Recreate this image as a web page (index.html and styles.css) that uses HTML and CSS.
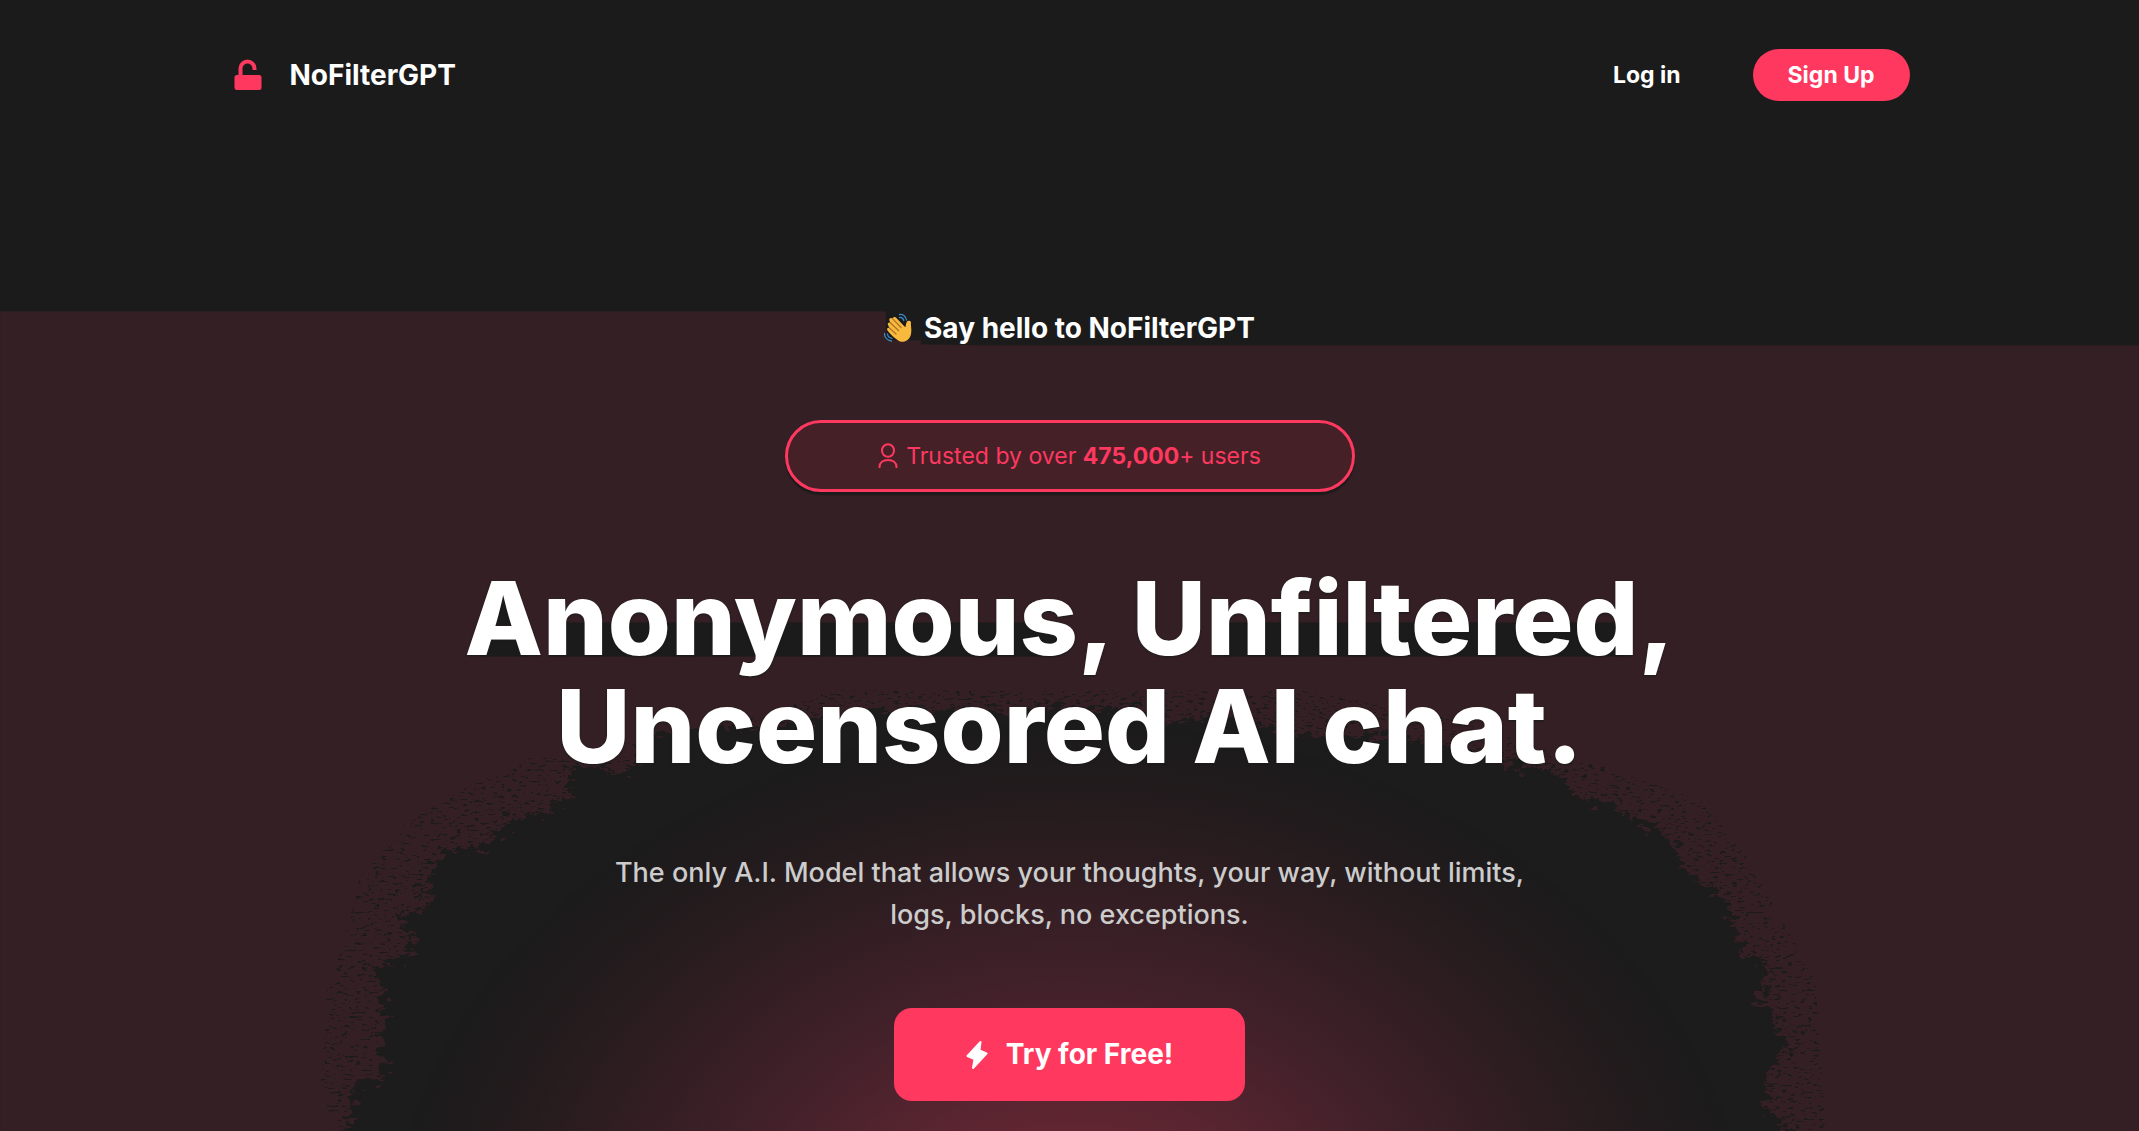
FILE: index.html
```html
<!DOCTYPE html>
<html lang="en">
<head>
  <meta charset="UTF-8">
  <title>NoFilterGPT</title>
  <meta name="viewport" content="width=device-width, initial-scale=1.0">
  <link rel="stylesheet" href="styles.css">
</head>
<body>
  <!-- backdrop -->
  <svg class="backdrop" viewBox="0 0 2139 1131" preserveAspectRatio="xMidYMin slice" aria-hidden="true">
    <defs>
      <radialGradient id="glow">
        <stop offset="0" stop-color="#7c2a3b"/>
        <stop offset="0.24" stop-color="#612632"/>
        <stop offset="0.5" stop-color="#43212a"/>
        <stop offset="0.74" stop-color="#2d1d20"/>
        <stop offset="0.86" stop-color="#231b1d"/>
        <stop offset="1" stop-color="#1b1b1b"/>
      </radialGradient>
      <filter id="jagged" x="-5%" y="-5%" width="110%" height="110%">
        <feTurbulence type="fractalNoise" baseFrequency="0.08 0.14" numOctaves="4" seed="4"/>
        <feDisplacementMap in="SourceGraphic" scale="34" xChannelSelector="R" yChannelSelector="G"/>
      </filter>
      <filter id="speckle" x="0" y="0" width="100%" height="100%" color-interpolation-filters="sRGB">
        <feTurbulence type="fractalNoise" baseFrequency="0.16 0.45" numOctaves="3" seed="9"/>
        <feColorMatrix values="0 0 0 0 0.106  0 0 0 0 0.106  0 0 0 0 0.106  0 16 0 0 -10"/>
        <feComposite in2="SourceGraphic" operator="in"/>
      </filter>
    </defs>
    <path fill="#331f24" d="M1 311H886V340H921V344L980 345H2138V1131H1z"/>
    <path fill="#1b1b1b" d="M496 625L504 597L512 625zM484 638H524L528 656H480zM560 622H742L760 656H550zM785 622H1060V656H770zM1222 622H1626V656H1222z"/>
    <path filter="url(#speckle)" d="M334 1131L322 1080L328 990L345 940L360 880L402 825L470 785L530 757L640 756L830 690L1300 690L1440 715L1630 775L1700 800L1750 860L1788 930L1815 980L1825 1131z"/>
    <path fill="#1b1b1b" filter="url(#jagged)" d="M343 1150L343 1131L353 1118L352 1105L356 1082L382 1080L385 1060L380 1040L385 1000L382 980L374 972L390 960L410 955L412 938L400 912L420 910L431 905L425 890L432 880L428 870L440 862L447 848L490 846L490 832L506 830L508 816L555 812L552 800L568 800L573 766L605 764L610 772L634 771L640 735L797 722L864 710L976 710L1136 707L1167 720L1247 720L1310 737L1386 737L1457 745L1500 763L1552 770L1570 778L1573 793L1590 801L1615 802L1625 815L1647 820L1652 832L1668 836L1676 848L1685 870L1700 880L1725 895L1733 925L1740 940L1745 956L1765 960L1762 985L1760 1000L1772 1010L1775 1030L1790 1040L1775 1058L1770 1080L1765 1095L1762 1110L1780 1115L1790 1131V1150z"/>
    <ellipse cx="1069" cy="1260" rx="680" ry="540" fill="url(#glow)"/>
  </svg>

  <header class="header">
    <a class="brand" href="#">
      <svg class="brand-icon" viewBox="0 0 28 32" aria-hidden="true">
        <path d="M6.500 18V9.500A7 7 0 0 1 20.500 9.500V11" fill="none" stroke="#ff3860" stroke-width="4"/>
        <rect x="0.500" y="16" width="27" height="15" rx="2.500" fill="#ff3860"/>
      </svg>
      <span>NoFilterGPT</span>
    </a>
    <nav class="nav">
      <a class="login" href="#">Log in</a>
      <a class="signup" href="#">Sign Up</a>
    </nav>
  </header>

  <main class="hero">
    <p class="hello">
      <svg class="wave" viewBox="0 0 30 30" aria-hidden="true">
        <path d="M4 12C3 10.500 5 8.500 6.600 10L5.400 7.500C4.600 5.500 7 4 8.500 5.600L8.800 5.500C9 3.800 11.300 3.500 12.400 5L20.500 13.500L21.500 14C22 12 22 10 23 8.500C24 7 27 7.500 27 9.500C26.500 13 28 16 27 21C26 26.500 21 30 16 28.500C13 27.500 4 19 3.200 17C2.600 15.200 4 14 5.500 15z" fill="#f9b93c"/>
        <path d="M6.600 10L14.500 17.500M8.700 5.800L17 14.500M5.500 15L12 21" fill="none" stroke="#a9702b" stroke-width="1.200" stroke-linecap="round"/>
        <path d="M15.500 1.500C19 1 22 3.500 22.500 7M15.500 4.500C17.500 4.300 19.300 5.500 19.800 7.500M0.500 20.500C0.500 24.500 3.500 27.500 7.500 28M3.500 21C3.800 23.500 5.500 25 8 25.300" fill="none" stroke="#3b88c3" stroke-width="1.300" stroke-linecap="round"/>
      </svg>
      <span>Say hello to NoFilterGPT</span>
    </p>

    <div class="trusted">
      <svg class="user" viewBox="0 0 20 26" aria-hidden="true">
        <ellipse cx="10" cy="7.500" rx="6" ry="6.300"/>
        <path d="M1.500 25V24C1.500 19.500 5.200 17 10 17S18.500 19.500 18.500 24V25"/>
      </svg>
      <span>Trusted by over <strong>475,000</strong>+ users</span>
    </div>

    <h1>Anonymous, Unfiltered,<br>Uncensored AI chat.</h1>

    <p class="lead">The only A.I. Model that allows your thoughts, your way, without limits,<br>logs, blocks, no exceptions.</p>

    <a class="cta" href="#">
      <svg class="bolt" viewBox="0 0 22 28" aria-hidden="true">
        <path d="M14.500 1L1.500 15L8.500 18L7 27L20.500 12.500L13.500 9.500z" fill="#fff" stroke="#fff" stroke-width="2" stroke-linejoin="round"/>
      </svg>
      <span>Try for Free!</span>
    </a>
  </main>
</body>
</html>
```
FILE: styles.css
```css
* {
  box-sizing: border-box;
}

body {
  position: relative;
  margin: 0;
  min-height: 100vh;
  overflow-x: hidden;
  background: #1b1b1b;
  color: #fff;
  font-family: Inter, sans-serif;
}

a {
  color: inherit;
  text-decoration: none;
}

.backdrop {
  position: absolute;
  inset: 0;
  width: 100%;
  height: 100%;
  z-index: -1;
}

.header {
  display: flex;
  align-items: center;
  justify-content: space-between;
  max-width: 1680px;
  margin: 0 auto;
  padding-top: 49px;
}

.brand {
  display: flex;
  align-items: center;
  gap: 28px;
  padding-left: 4px;
  font-size: 28px;
  font-weight: 700;
}

.brand-icon {
  width: 28px;
  height: 32px;
}

.nav {
  display: flex;
  align-items: center;
  gap: 72px;
  font-size: 23px;
  font-weight: 700;
}

.signup {
  padding: 0 35px;
  border-radius: 26px;
  background: #ff3860;
  line-height: 52px;
}

.hero {
  display: flex;
  flex-direction: column;
  align-items: center;
  gap: 72px;
  padding: 207px 24px 31px;
  text-align: center;
}

.hello {
  display: flex;
  align-items: center;
  gap: 10px;
  margin: 0;
  font-size: 28px;
  font-weight: 700;
  line-height: 40px;
}

.wave {
  width: 30px;
  height: 30px;
}

.trusted {
  display: flex;
  align-items: center;
  justify-content: center;
  gap: 8px;
  width: 100%;
  max-width: 570px;
  border: 3px solid #ff3860;
  border-radius: 36px;
  background: #462027;
  box-shadow: 0 3px 1px #1b1b1b;
  color: #ff3860;
  font-size: 23px;
  line-height: 66px;
}

.user {
  width: 20px;
  height: 26px;
  fill: none;
  stroke: #ff3860;
  stroke-width: 2;
}

h1 {
  margin: 0;
  font-size: 102px;
  font-weight: 800;
  line-height: 108px;
  text-shadow: 0 1px 2px #1b1b1b;
}

.lead {
  margin: 0;
  color: #ccc;
  font-size: 27px;
  font-weight: 500;
  line-height: 42px;
}

.cta {
  display: flex;
  align-items: center;
  gap: 18px;
  padding: 0 72px;
  border-radius: 18px;
  background: #ff3860;
  font-size: 28px;
  font-weight: 700;
  line-height: 93px;
}

.bolt {
  width: 22px;
  height: 28px;
}
```
